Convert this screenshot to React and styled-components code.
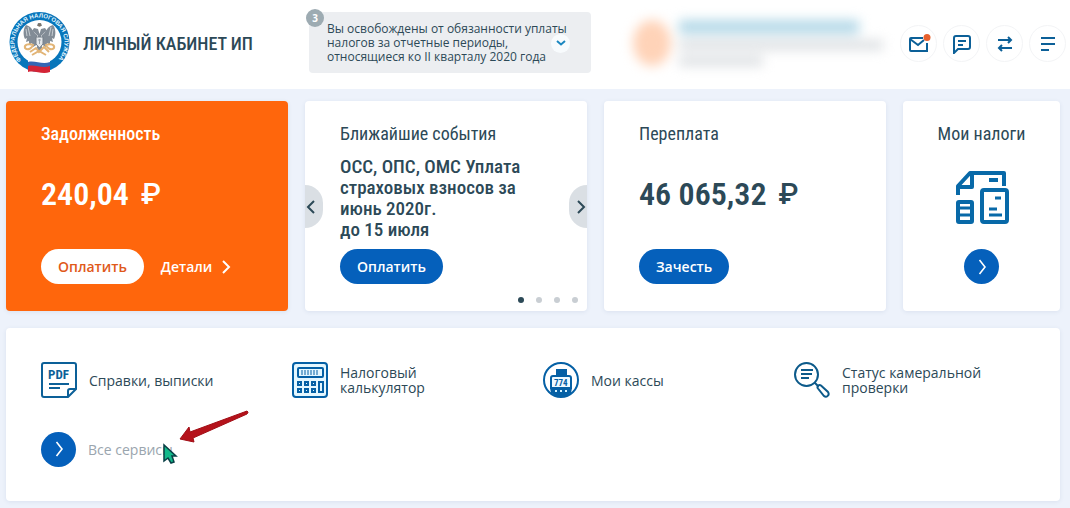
import React from 'react';
import styled, { createGlobalStyle } from 'styled-components';

const headingFont = '"Roboto Condensed", "Liberation Sans Narrow", "DejaVu Sans Condensed", sans-serif';
const bodyFont = '"Open Sans", "Noto Sans", sans-serif';

const GlobalStyle = createGlobalStyle`
  * {
    box-sizing: border-box;
  }
  body {
    margin: 0;
    background: #edf2fb;
    color: #2c4957;
    font-family: ${bodyFont};
    font-size: 14px;
  }
  button {
    font-family: inherit;
    cursor: pointer;
  }
  svg {
    display: block;
    flex: none;
  }
`;

const Header = styled.header`
  display: flex;
  align-items: flex-start;
  height: 89px;
  padding: 12px 4px 0 9px;
  background: #fff;
`;

const Brand = styled.a`
  display: flex;
  align-items: center;
  gap: 13px;
  width: 300px;
  color: #2c4957;
  font-family: ${headingFont};
  font-size: 18px;
  font-weight: 500;
  text-decoration: none;
  white-space: nowrap;
`;

const Notice = styled.div`
  position: relative;
  display: flex;
  align-items: center;
  width: 282px;
  height: 61px;
  padding: 0 18px;
  border-radius: 4px;
  background: #eceef1;
  font-size: 12px;
  line-height: 14px;
`;

const NoticeText = styled.p`
  margin: 0;
  white-space: nowrap;
`;

const NoticeCount = styled.span`
  position: absolute;
  top: -3px;
  left: -3px;
  width: 18px;
  height: 18px;
  border-radius: 50%;
  background: #9dabb2;
  color: #fff;
  font-size: 10px;
  font-weight: bold;
  line-height: 18px;
  text-align: center;
`;

const NoticeToggle = styled.button`
  position: absolute;
  right: 21px;
  bottom: 20px;
  display: flex;
  align-items: center;
  justify-content: center;
  width: 19px;
  height: 19px;
  padding: 0;
  border: 0;
  border-radius: 50%;
  background: #f8fbfd;
  color: #1b87c0;
`;

const Profile = styled.div`
  display: flex;
  align-items: center;
  gap: 8px;
  margin: 8px auto 0 42px;
  filter: blur(6px);
`;

const ProfilePhoto = styled.div`
  width: 38px;
  height: 46px;
  border-radius: 50%;
  background: #ffd3b8;
`;

const ProfileLines = styled.div`
  display: flex;
  flex-direction: column;
  gap: 6px;
`;

const ProfileLine = styled.div`
  width: ${({ $width }) => $width}px;
  height: ${({ $strong }) => ($strong ? 14 : 10)}px;
  background: ${({ $strong }) => ($strong ? '#b5d9e8' : '#dde0e3')};
`;

const Tools = styled.nav`
  display: flex;
  gap: 6px;
  margin-top: 13px;
`;

const ToolButton = styled.button`
  display: flex;
  align-items: center;
  justify-content: center;
  width: 37px;
  height: 37px;
  padding: 0;
  border: 1px solid #f3f4f6;
  border-radius: 50%;
  background: #fff;
  color: #0c6098;
`;

const Main = styled.main`
  display: flex;
  flex-direction: column;
  gap: 17px;
  padding: 12px 10px 7px 6px;
`;

const Cards = styled.div`
  display: grid;
  grid-template-columns: 282fr 282fr 282fr 157fr;
  gap: 17px;
`;

const Card = styled.section`
  position: relative;
  display: flex;
  flex-direction: column;
  align-items: ${({ $centered }) => ($centered ? 'center' : 'flex-start')};
  min-height: 210px;
  padding: ${({ $centered }) => ($centered ? '20px 0 27px' : '20px 35px 27px')};
  overflow: hidden;
  border-radius: 4px;
  background: ${({ $debt }) => ($debt ? '#ff660c' : '#fff')};
  color: ${({ $debt }) => ($debt ? '#fff' : '#2c4957')};
  box-shadow: 0 1px 4px rgba(60, 90, 140, 0.1);
`;

const CardTitle = styled.h2`
  margin: 0;
  font-family: ${headingFont};
  font-size: 18px;
  font-weight: ${({ $bold }) => ($bold ? 500 : 400)};
  line-height: 26px;
  white-space: nowrap;
`;

const Amount = styled.p`
  display: flex;
  align-items: center;
  gap: 12px;
  margin: 28px 0 0;
  font-family: ${headingFont};
  font-size: 32px;
  font-weight: 600;
  line-height: 38px;
  white-space: nowrap;
`;

const Currency = styled.span`
  font-family: Roboto, sans-serif;
  font-size: 29px;
  font-weight: 500;
`;

const EventText = styled.p`
  margin: 9px 0 0;
  font-family: ${headingFont};
  font-size: 19px;
  font-weight: 500;
  line-height: 21px;
  white-space: nowrap;
`;

const Actions = styled.div`
  display: flex;
  align-items: center;
  gap: 17px;
  margin-top: auto;
`;

const PillButton = styled.button`
  height: 35px;
  padding: 0 17px;
  border: 0;
  border-radius: 18px;
  background: ${({ $light }) => ($light ? '#fff' : '#0560bb')};
  color: ${({ $light }) => ($light ? '#e0591a' : '#fff')};
  font-size: 14px;
  font-weight: 600;
`;

const DetailsLink = styled.a`
  display: flex;
  align-items: center;
  gap: 9px;
  color: #fff;
  font-weight: 600;
  text-decoration: none;
`;

const SlideButton = styled.button`
  position: absolute;
  top: 84px;
  ${({ $side }) => $side}: 0;
  display: flex;
  align-items: center;
  justify-content: ${({ $side }) => ($side === 'left' ? 'flex-start' : 'flex-end')};
  width: 18px;
  height: 43px;
  padding: 0 1px;
  border: 0;
  border-radius: ${({ $side }) => ($side === 'left' ? '0 18px 18px 0' : '18px 0 0 18px')};
  background: #dadfe4;
  color: #2c4957;
`;

const Dots = styled.div`
  position: absolute;
  right: 9px;
  bottom: 8px;
  display: flex;
  gap: 12px;
`;

const Dot = styled.span`
  width: 6px;
  height: 6px;
  border-radius: 50%;
  background: ${({ $active }) => ($active ? '#2c4957' : '#c9ced3')};
`;

const TaxesIcon = styled.svg`
  margin: 23px 0 auto;
`;

const RoundLink = styled.a`
  display: flex;
  align-items: center;
  justify-content: center;
  width: 35px;
  height: 35px;
  border-radius: 50%;
  background: #0560bb;
  color: #fff;
`;

const Services = styled.section`
  display: grid;
  grid-template-columns: repeat(4, 1fr);
  grid-auto-rows: 36px;
  row-gap: 33px;
  min-height: 173px;
  padding: 34px 15px 34px 35px;
  border-radius: 4px;
  background: #fff;
  box-shadow: 0 1px 4px rgba(60, 90, 140, 0.1);
`;

const Service = styled.a`
  position: relative;
  display: flex;
  align-items: center;
  gap: 12px;
  color: ${({ $muted }) => ($muted ? '#9aa5ae' : '#2c4957')};
  font-size: 14px;
  font-weight: 500;
  line-height: 15px;
  text-decoration: none;
  white-space: nowrap;
`;

const ServiceLine = styled.span`
  display: block;
`;

const RoundMark = styled(RoundLink).attrs({ as: 'span' })``;

const Pointer = styled.svg`
  position: absolute;
  top: -22px;
  left: 118px;
`;

const Chevron = ({ left }) => (
  <svg width="10" height="14" viewBox="0 0 10 14" fill="none" stroke="currentColor" strokeWidth="2">
    <path d={left ? 'M8 1L2 7l6 6' : 'M2 1l6 6-6 6'} />
  </svg>
);

const ThinChevron = () => (
  <svg width="10" height="16" viewBox="0 0 10 16" fill="none" stroke="currentColor" strokeWidth="1.600">
    <path d="M2.500 1L8 8l-5.500 7" />
  </svg>
);

const DownChevron = () => (
  <svg width="10" height="7" viewBox="0 0 10 7" fill="none" stroke="currentColor" strokeWidth="2">
    <path d="M1 1l4 3.500 4-3.500" />
  </svg>
);

const Logo = () => (
  <svg width="61" height="62" viewBox="0 0 61 62" role="img" aria-label="ФНС">
    <defs>
      <path id="ring" d="M12.500 48A25 25 0 1 1 48.500 48" />
    </defs>
    <circle cx="30.500" cy="30" r="30" fill="#0876bb" />
    <circle cx="30.500" cy="30" r="22" fill="#fff" />
    <text fill="#e6f6ff" fontFamily="Liberation Sans" fontSize="6" fontWeight="bold">
      <textPath href="#ring">ФЕДЕРАЛЬНАЯ НАЛОГОВАЯ СЛУЖБА</textPath>
    </text>
    <g fill="#828c96">
      <path d="M28 23C24 21 23 14 17 13c-3 4-3 10-1 14l2-1-1 4 3-1v4l3-2 1 4 5-3z" />
      <path d="M33 23c4-2 5-9 11-10 3 4 3 10 1 14l-2-1 1 4-3-1v4l-3-2-1 4-5-3z" />
      <path d="M29 24l-4-4-2-1 2-3 4 1 1.500 5 1.500-5 4-1 2 3-2 1-4 4 1 12-2.500 4-2.500-4z" />
      <path d="M28 14l1-3h3l1 3z" />
    </g>
    <path d="M19 15l2 9m-4-7l1 7m24-9l-2 9m4-7l-1 7" stroke="#c6cdd2" fill="none" />
    <circle cx="30.500" cy="13" r="1.800" fill="#7d7468" />
    <path d="M27 25h7v7l-3.500 4-3.500-4z" fill="#e4e8eb" stroke="#747e88" />
    <path d="M29 28h3m-1.500-1v5" stroke="#9ba5ad" />
    <g fill="none" stroke="#e2b577" strokeWidth="2">
      <path d="M24 33c-5-2-9 0-8 3 3 3 7 0 8-3zm13 0c5-2 9 0 8 3-3 3-7 0-8-3z" />
      <path d="M21 40l6-4 3 4 5-5 5 5m-17 3l7-4 7 4" />
    </g>
    <path d="M19 45c7-2 14 3 22 0v6c-8 3-15-2-22 0z" fill="#fff" />
    <path d="M19 50c7-2 14 3 22 0v5c-8 3-15-2-22 0z" fill="#3466b4" />
    <path d="M19 54c7-2 14 3 22 0v6c-8 3-15-2-22 0z" fill="#d42436" />
  </svg>
);

const PdfIcon = () => (
  <svg width="36" height="36" viewBox="0 0 36 36" fill="none" stroke="#0c6098" strokeWidth="2">
    <path d="M3 1h30a2 2 0 0 1 2 2v24l-8 8H3a2 2 0 0 1-2-2V3a2 2 0 0 1 2-2z" />
    <path d="M27 34v-5a2 2 0 0 1 2-2h5M8 22h20M8 26h11" />
    <text x="7" y="17" fill="#0c6098" stroke="none" fontFamily="Roboto Condensed" fontSize="13" fontWeight="bold">PDF</text>
  </svg>
);

const CalculatorIcon = () => (
  <svg width="36" height="36" viewBox="0 0 36 36" fill="none" stroke="#0560a5" strokeWidth="2">
    <rect x="1" y="1" width="34" height="34" rx="3" fill="#e4f7ff" />
    <rect x="6" y="6" width="25" height="9" rx="1" />
    <path d="M10 8v5m3-5v5m3-5v5m3-5v5m3-5v5m3-5v5" strokeWidth="1" />
    <path d="M6 20h3v3H6zM13 20h3v3h-3zM20 20h3v3h-3zM6 27h3v3H6zM13 27h3v3h-3zM20 27h3v3h-3zM27 20h4v10h-4z" />
  </svg>
);

const RegisterIcon = () => (
  <svg width="36" height="36" viewBox="0 0 36 36" fill="none" stroke="#0560a5" strokeWidth="2">
    <circle cx="18" cy="18" r="17" />
    <path d="M13 7h11v7H13z" fill="#0560a5" stroke="none" />
    <path d="M10 14h16a2 2 0 0 1 2 2v10H8V16a2 2 0 0 1 2-2z" fill="#effaff" />
    <path d="M7 26h22l-1 5-5 3H13l-5-3z" fill="#0560a5" stroke="none" />
    <text x="11" y="24" fill="#0560a5" stroke="none" fontFamily="Roboto Condensed" fontSize="9" fontWeight="bold">774</text>
    <path d="M12 29h2m3 0h2m3 0h2" stroke="#d4f2ff" />
  </svg>
);

const SearchIcon = () => (
  <svg width="36" height="36" viewBox="0 0 36 36" fill="none" stroke="#0c5a8a" strokeWidth="2">
    <circle cx="12.500" cy="12.500" r="11.500" />
    <path d="M7 8h12M7 12h11M7 16h8M20.500 20.500l4 4" />
    <path d="M24 26.500c-1.500-2 1-4.500 3-3l7 6.500c2 3-1.500 6-4 4z" />
  </svg>
);

const RedArrow = () => (
  <Pointer width="92" height="56" viewBox="0 0 92 56" aria-hidden="true">
    <path d="M21 30L30 18l1 5L88 2q2 1 0 3L34 29l1 4z" fill="#b5121b" stroke="#a10d15" strokeLinejoin="round" />
    <path d="M5 36v16l4-3 3 5 3-1-2-6h4z" fill="#13b98a" stroke="#083f45" strokeWidth="1.500" />
  </Pointer>
);

const services = [
  { lines: ['Справки, выписки'], Icon: PdfIcon },
  { lines: ['Налоговый', 'калькулятор'], Icon: CalculatorIcon },
  { lines: ['Мои кассы'], Icon: RegisterIcon },
  { lines: ['Статус камеральной', 'проверки'], Icon: SearchIcon },
];

const App = () => (
  <>
    <GlobalStyle />
    <Header>
      <Brand href="#">
        <Logo />
        ЛИЧНЫЙ КАБИНЕТ ИП
      </Brand>
      <Notice>
        <NoticeCount>3</NoticeCount>
        <NoticeText>
          Вы освобождены от обязанности уплаты<br />
          налогов за отчетные периоды,<br />
          относящиеся ко II кварталу 2020 года
        </NoticeText>
        <NoticeToggle aria-label="Развернуть">
          <DownChevron />
        </NoticeToggle>
      </Notice>
      <Profile>
        <ProfilePhoto />
        <ProfileLines>
          <ProfileLine $width={180} $strong />
          <ProfileLine $width={204} />
          <ProfileLine $width={84} />
        </ProfileLines>
      </Profile>
      <Tools>
        <ToolButton aria-label="Сообщения">
          <svg width="24" height="22" viewBox="0 0 24 22" fill="none" stroke="currentColor" strokeWidth="2">
            <path d="M16 5H4a1 1 0 0 0-1 1v11a1 1 0 0 0 1 1h16v-8M3 6l8 6 6-5" />
            <circle cx="20" cy="4.500" r="3.500" fill="#e8602c" stroke="none" />
          </svg>
        </ToolButton>
        <ToolButton aria-label="Обращения">
          <svg width="20" height="20" viewBox="0 0 20 20" fill="none" stroke="currentColor" strokeWidth="2">
            <path d="M2 19V4a2 2 0 0 1 2-2h12a2 2 0 0 1 2 2v9a2 2 0 0 1-2 2H6zM6 7h8M6 11h5" />
          </svg>
        </ToolButton>
        <ToolButton aria-label="Сменить кабинет">
          <svg width="16" height="16" viewBox="0 0 16 16" fill="none" stroke="currentColor" strokeWidth="2">
            <path d="M1 4h13M11 1l3 3-3 3M15 12H2M5 9l-3 3 3 3" />
          </svg>
        </ToolButton>
        <ToolButton aria-label="Меню">
          <svg width="16" height="16" viewBox="0 0 16 16" fill="none" stroke="currentColor" strokeWidth="2">
            <path d="M1 2h14M1 8h14M1 14h8" />
          </svg>
        </ToolButton>
      </Tools>
    </Header>
    <Main>
      <Cards>
        <Card $debt>
          <CardTitle $bold>Задолженность</CardTitle>
          <Amount>240,04 <Currency>₽</Currency></Amount>
          <Actions>
            <PillButton $light>Оплатить</PillButton>
            <DetailsLink href="#">Детали <Chevron /></DetailsLink>
          </Actions>
        </Card>
        <Card>
          <CardTitle>Ближайшие события</CardTitle>
          <EventText>
            ОСС, ОПС, ОМС Уплата<br />
            страховых взносов за<br />
            июнь 2020г.<br />
            до 15 июля
          </EventText>
          <Actions>
            <PillButton>Оплатить</PillButton>
          </Actions>
          <SlideButton $side="left" aria-label="Назад"><Chevron left /></SlideButton>
          <SlideButton $side="right" aria-label="Вперед"><Chevron /></SlideButton>
          <Dots>
            <Dot $active />
            <Dot />
            <Dot />
            <Dot />
          </Dots>
        </Card>
        <Card>
          <CardTitle>Переплата</CardTitle>
          <Amount>46 065,32 <Currency>₽</Currency></Amount>
          <Actions>
            <PillButton>Зачесть</PillButton>
          </Actions>
        </Card>
        <Card $centered>
          <CardTitle>Мои налоги</CardTitle>
          <TaxesIcon width="54" height="54" viewBox="0 0 54 54" fill="none" stroke="#0869a8" strokeWidth="4" strokeLinejoin="round">
            <path d="M3 25v-9L15 3h34v13M3 17h14V3M34 10h9" />
            <rect x="27" y="20" width="25" height="32" rx="2" />
            <path d="M40 28h6M34 39h8M34 45h13" strokeWidth="3" />
            <rect x="3" y="32" width="14" height="20" rx="1" />
            <path d="M3 38h14M3 45h14" strokeWidth="3" />
          </TaxesIcon>
          <RoundLink href="#" aria-label="Мои налоги"><ThinChevron /></RoundLink>
        </Card>
      </Cards>
      <Services>
        {services.map(({ lines, Icon }) => (
          <Service href="#" key={lines[0]}>
            <Icon />
            <span>
              {lines.map(line => <ServiceLine key={line}>{line}</ServiceLine>)}
            </span>
          </Service>
        ))}
        <Service href="#" $muted>
          <RoundMark><ThinChevron /></RoundMark>
          Все сервисы
          <RedArrow />
        </Service>
      </Services>
    </Main>
  </>
);

export default App;
